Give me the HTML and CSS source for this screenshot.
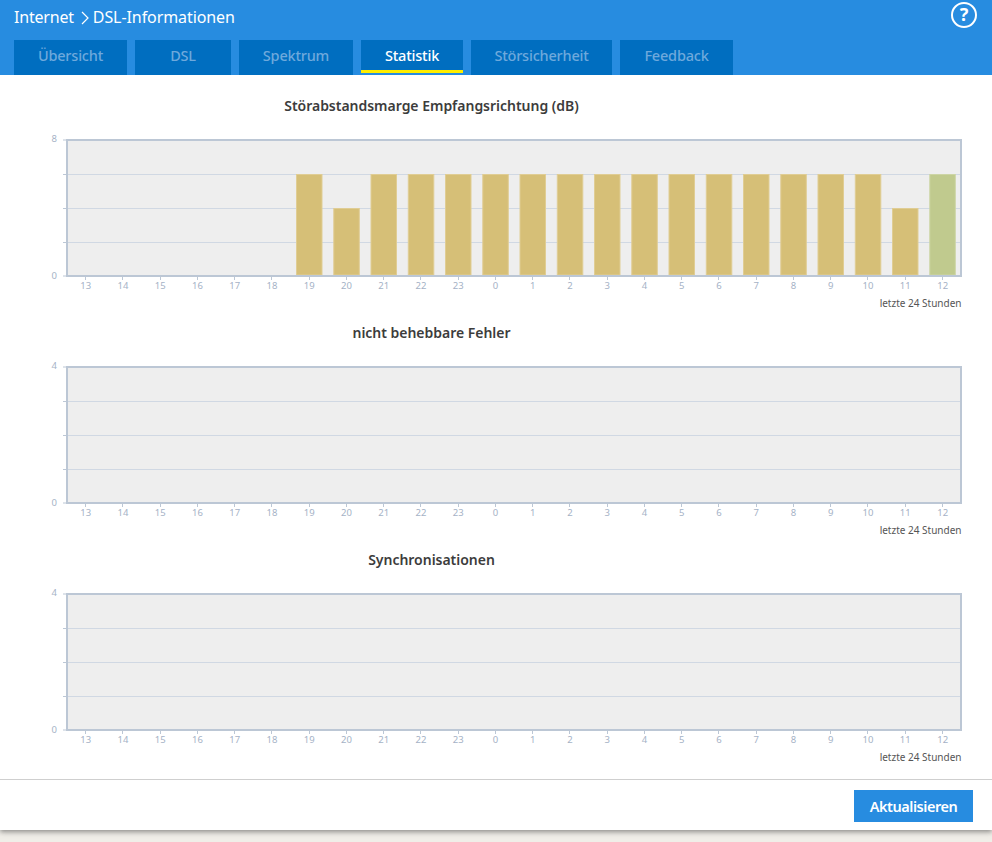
FILE: index.html
```
<!DOCTYPE html>
<html lang="de">
<head>
<meta charset="utf-8">
<title>DSL-Informationen</title>
<link rel="stylesheet" href="styles.css">
</head>
<body>
<div class="sheet">
  <header class="top">
    <div class="top-row">
      <h1 class="crumb"><span>Internet</span>
        <svg class="chev" width="8" height="14" viewBox="0 0 8 14"><path d="M1 1l6 6-6 6" fill="none" stroke="#fff" stroke-width="1.2"/></svg>
        <span class="crumb-page">DSL-Informationen</span></h1>
      <div class="help">?</div>
    </div>
    <nav class="tabs">
      <a class="tab t1">Übersicht</a>
      <a class="tab t2">DSL</a>
      <a class="tab t3">Spektrum</a>
      <a class="tab t4 active">Statistik</a>
      <a class="tab t5">Störsicherheit</a>
      <a class="tab t6">Feedback</a>
    </nav>
  </header>
  <main class="content">
    <section class="chart first">
      <h2 class="chart-title">Störabstandsmarge Empfangsrichtung (dB)</h2>
      <svg class="plot" width="992" height="157" viewBox="0 0 992 157">
        <rect class="area" x="67" y="1" width="894" height="136"/>
        <path class="grid" d="M67 35.5H961M67 69.5H961M67 103.5H961"/>
        <path class="tick" d="M63 1H66M63 35.5H66M63 69.5H66M63 103.5H66M63 137H66"/>
        <g class="bars">
          <rect x="296.5" y="35.5" width="25.5" height="100.5"/><rect x="333.8" y="69.5" width="25.5" height="66.5"/><rect x="371" y="35.5" width="25.5" height="100.5"/><rect x="408.3" y="35.5" width="25.5" height="100.5"/><rect x="445.5" y="35.5" width="25.5" height="100.5"/><rect x="482.8" y="35.5" width="25.5" height="100.5"/><rect x="520" y="35.5" width="25.5" height="100.5"/><rect x="557.3" y="35.5" width="25.5" height="100.5"/><rect x="594.5" y="35.5" width="25.5" height="100.5"/><rect x="631.8" y="35.5" width="25.5" height="100.5"/><rect x="669" y="35.5" width="25.5" height="100.5"/><rect x="706.3" y="35.5" width="25.5" height="100.5"/><rect x="743.5" y="35.5" width="25.5" height="100.5"/><rect x="780.8" y="35.5" width="25.5" height="100.5"/><rect x="818" y="35.5" width="25.5" height="100.5"/><rect x="855.3" y="35.5" width="25.5" height="100.5"/><rect x="892.5" y="69.5" width="25.5" height="66.5"/><rect class="now" x="929.8" y="35.5" width="25.5" height="100.5"/>
        </g>
        <rect class="frame" x="67" y="1" width="894" height="136"/>
        <path class="tick" d="M85.5 138V141M122.5 138V141M160.5 138V141M197.5 138V141M234.5 138V141M271.5 138V141M309.5 138V141M346.5 138V141M383.5 138V141M420.5 138V141M458.5 138V141M495.5 138V141M532.5 138V141M569.5 138V141M607.5 138V141M644.5 138V141M681.5 138V141M718.5 138V141M756.5 138V141M793.5 138V141M830.5 138V141M867.5 138V141M905.5 138V141M942.5 138V141"/>
        <g class="ylab"><text x="57" y="3">8</text><text x="57" y="140">0</text></g>
        <g class="xlab"><text x="85.7" y="150">13</text><text x="123" y="150">14</text><text x="160.2" y="150">15</text><text x="197.5" y="150">16</text><text x="234.7" y="150">17</text><text x="272" y="150">18</text><text x="309.3" y="150">19</text><text x="346.5" y="150">20</text><text x="383.8" y="150">21</text><text x="421" y="150">22</text><text x="458.3" y="150">23</text><text x="495.5" y="150">0</text><text x="532.8" y="150">1</text><text x="570" y="150">2</text><text x="607.3" y="150">3</text><text x="644.5" y="150">4</text><text x="681.8" y="150">5</text><text x="719" y="150">6</text><text x="756.3" y="150">7</text><text x="793.5" y="150">8</text><text x="830.8" y="150">9</text><text x="868" y="150">10</text><text x="905.3" y="150">11</text><text x="942.7" y="150">12</text></g>
      </svg>
      <p class="range">letzte 24 Stunden</p>
    </section>
    <section class="chart">
      <h2 class="chart-title">nicht behebbare Fehler</h2>
      <svg class="plot" width="992" height="157" viewBox="0 0 992 157">
        <rect class="area" x="67" y="1" width="894" height="136"/>
        <path class="grid" d="M67 35.5H961M67 69.5H961M67 103.5H961"/>
        <path class="tick" d="M63 1H66M63 35.5H66M63 69.5H66M63 103.5H66M63 137H66"/>
        <rect class="frame" x="67" y="1" width="894" height="136"/>
        <path class="tick" d="M85.5 138V141M122.5 138V141M160.5 138V141M197.5 138V141M234.5 138V141M271.5 138V141M309.5 138V141M346.5 138V141M383.5 138V141M420.5 138V141M458.5 138V141M495.5 138V141M532.5 138V141M569.5 138V141M607.5 138V141M644.5 138V141M681.5 138V141M718.5 138V141M756.5 138V141M793.5 138V141M830.5 138V141M867.5 138V141M905.5 138V141M942.5 138V141"/>
        <g class="ylab"><text x="57" y="3">4</text><text x="57" y="140">0</text></g>
        <g class="xlab"><text x="85.7" y="150">13</text><text x="123" y="150">14</text><text x="160.2" y="150">15</text><text x="197.5" y="150">16</text><text x="234.7" y="150">17</text><text x="272" y="150">18</text><text x="309.3" y="150">19</text><text x="346.5" y="150">20</text><text x="383.8" y="150">21</text><text x="421" y="150">22</text><text x="458.3" y="150">23</text><text x="495.5" y="150">0</text><text x="532.8" y="150">1</text><text x="570" y="150">2</text><text x="607.3" y="150">3</text><text x="644.5" y="150">4</text><text x="681.8" y="150">5</text><text x="719" y="150">6</text><text x="756.3" y="150">7</text><text x="793.5" y="150">8</text><text x="830.8" y="150">9</text><text x="868" y="150">10</text><text x="905.3" y="150">11</text><text x="942.7" y="150">12</text></g>
      </svg>
      <p class="range">letzte 24 Stunden</p>
    </section>
    <section class="chart">
      <h2 class="chart-title">Synchronisationen</h2>
      <svg class="plot" width="992" height="157" viewBox="0 0 992 157">
        <rect class="area" x="67" y="1" width="894" height="136"/>
        <path class="grid" d="M67 35.5H961M67 69.5H961M67 103.5H961"/>
        <path class="tick" d="M63 1H66M63 35.5H66M63 69.5H66M63 103.5H66M63 137H66"/>
        <rect class="frame" x="67" y="1" width="894" height="136"/>
        <path class="tick" d="M85.5 138V141M122.5 138V141M160.5 138V141M197.5 138V141M234.5 138V141M271.5 138V141M309.5 138V141M346.5 138V141M383.5 138V141M420.5 138V141M458.5 138V141M495.5 138V141M532.5 138V141M569.5 138V141M607.5 138V141M644.5 138V141M681.5 138V141M718.5 138V141M756.5 138V141M793.5 138V141M830.5 138V141M867.5 138V141M905.5 138V141M942.5 138V141"/>
        <g class="ylab"><text x="57" y="3">4</text><text x="57" y="140">0</text></g>
        <g class="xlab"><text x="85.7" y="150">13</text><text x="123" y="150">14</text><text x="160.2" y="150">15</text><text x="197.5" y="150">16</text><text x="234.7" y="150">17</text><text x="272" y="150">18</text><text x="309.3" y="150">19</text><text x="346.5" y="150">20</text><text x="383.8" y="150">21</text><text x="421" y="150">22</text><text x="458.3" y="150">23</text><text x="495.5" y="150">0</text><text x="532.8" y="150">1</text><text x="570" y="150">2</text><text x="607.3" y="150">3</text><text x="644.5" y="150">4</text><text x="681.8" y="150">5</text><text x="719" y="150">6</text><text x="756.3" y="150">7</text><text x="793.5" y="150">8</text><text x="830.8" y="150">9</text><text x="868" y="150">10</text><text x="905.3" y="150">11</text><text x="942.7" y="150">12</text></g>
      </svg>
      <p class="range">letzte 24 Stunden</p>
    </section>
  </main>
  <footer class="actions">
    <button class="refresh" type="button">Aktualisieren</button>
  </footer>
</div>
</body>
</html>
```
FILE: styles.css
```
html, body {
  margin: 0;
  padding: 0;
  height: 100%;
  overflow: hidden;
  background: #f0eee8;
  font-family: "Noto Sans", "Open Sans", sans-serif;
}

.sheet {
  height: 830px;
  background: #fff;
  box-shadow: 0 2px 5px rgba(60, 60, 60, 0.55);
  display: flex;
  flex-direction: column;
}

.top {
  height: 75px;
  background: #278ce0;
  flex: none;
  padding: 0 14px;
  box-sizing: border-box;
}

.top-row {
  height: 40px;
  display: flex;
  justify-content: space-between;
  align-items: flex-start;
}

.crumb {
  margin: 0;
  padding-top: 7px;
  font-size: 16px;
  line-height: 21px;
  font-weight: 400;
  color: #fff;
  letter-spacing: -0.2px;
  display: flex;
  align-items: center;
  gap: 7px;
}

.chev {
  margin-right: -3px;
}

.crumb-page {
  letter-spacing: -0.08px;
}

.help {
  width: 26px;
  height: 26px;
  margin: 2px 1px 0 0;
  box-sizing: border-box;
  border: 2.5px solid #fff;
  border-radius: 50%;
  color: #fff;
  font-size: 18px;
  font-weight: 700;
  line-height: 20px;
  text-align: center;
}

.tabs {
  display: flex;
  gap: 8px;
  height: 35px;
}

.tab {
  box-sizing: border-box;
  background: #006ec0;
  color: #6ea9dc;
  font-size: 14.5px;
  font-weight: 500;
  line-height: 31px;
  letter-spacing: -0.2px;
  text-align: center;
}

.t1 { width: 113px; }
.t2 { width: 96px; }
.t3 { width: 114px; }
.t4 { width: 102px; }
.t5 { width: 141px; }
.t6 { width: 113px; }

.tab.active {
  color: #fff;
  border-bottom: 3px solid #ffee00;
  height: 33px;
}

.content {
  flex: 1;
  min-height: 0;
}

.chart {
  height: 227px;
}

.chart.first {
  padding-top: 20px;
}

.chart-title {
  width: 863px;
  margin: 0;
  font-size: 14px;
  line-height: 22px;
  font-weight: 600;
  color: #3c3c3c;
  text-align: center;
  letter-spacing: -0.02px;
}

.plot {
  display: block;
  margin-top: 22px;
  overflow: visible;
}

.area { fill: #eeeeee; }
.grid { fill: none; stroke: #d0d8e3; stroke-width: 1; }
.tick { fill: none; stroke: #bcc7d5; stroke-width: 1; }
.frame { fill: none; stroke: #bcc7d5; stroke-width: 2; }

.bars rect {
  fill: #d6bf77;
  stroke: #e0cd94;
  stroke-width: 1;
}

.bars rect.now {
  fill: #c0ca8e;
  stroke: #cdd5a5;
}

.ylab text {
  font-size: 9.5px;
  fill: #a5b2c6;
  text-anchor: end;
}

.xlab text {
  font-size: 9.5px;
  fill: #a5b2c6;
  text-anchor: middle;
}

.range {
  margin: 0;
  width: 961.5px;
  text-align: right;
  font-size: 10px;
  line-height: 14px;
  color: #555;
}

.actions {
  flex: none;
  height: 51px;
  box-sizing: border-box;
  border-top: 1px solid #cfcfcf;
  display: flex;
  justify-content: flex-end;
  align-items: flex-start;
  padding: 10px 19px 0 0;
}

.refresh {
  width: 119px;
  height: 32px;
  border: 0;
  padding: 0;
  background: #278ce0;
  color: #fff;
  font-family: inherit;
  font-size: 14.5px;
  font-weight: 600;
  letter-spacing: -0.45px;
}
```
